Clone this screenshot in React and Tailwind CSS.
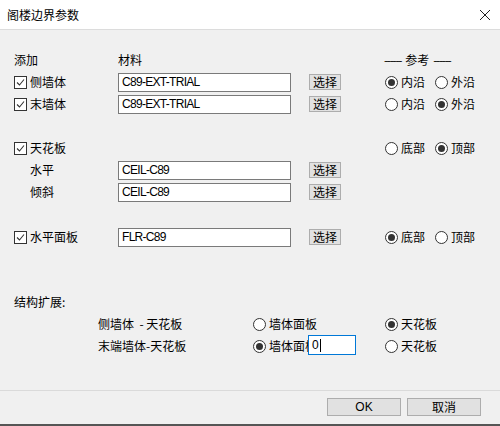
import React from 'react';

const cjk = "font-['Noto_Sans_CJK_SC',sans-serif]";

// small square checkbox with a tick
const Check = ({ label }) => (
  <div className="flex items-center">
    <span className="flex h-[13px] w-[13px] items-center justify-center border border-[#333] bg-white">
      <svg width="9" height="9" viewBox="0 0 9 9">
        <path d="M1 4.5 L3.5 7 L8 1.5" fill="none" stroke="#333" strokeWidth="1.1" />
      </svg>
    </span>
    <span className="ml-[3px]">{label}</span>
  </div>
);

const Radio = ({ label, on, width }) => (
  <div className="flex items-center" style={{ width }}>
    <span className="flex h-[13px] w-[13px] items-center justify-center rounded-full border border-[#333] bg-white">
      {on && <span className="h-[7px] w-[7px] rounded-full bg-[#333]" />}
    </span>
    <span className="ml-[3px] whitespace-nowrap">{label}</span>
  </div>
);

const Field = ({ value }) => (
  <div className="flex h-[19px] w-[173px] items-center border border-[#7a7a7a] bg-white pl-[3px] font-['Liberation_Sans',sans-serif] text-[12px] tracking-[-0.7px]">
    {value}
  </div>
);

const Pick = () => (
  <button className="ml-[18px] flex h-[16px] w-[32px] items-center justify-center border border-[#adadad] bg-[#e1e1e1] text-[12px] leading-none">
    选择
  </button>
);

const Row = ({ className = '', children }) => (
  <div className={`flex h-[22px] items-center ${className}`}>{children}</div>
);

const RefPair = ({ first, second, left }) => (
  <div className="ml-[44px] flex items-center">
    <Radio label={left[0]} on={first} width="50px" />
    <Radio label={left[1]} on={second} />
  </div>
);

export default function App() {
  return (
    <div className={`flex h-[426px] w-[500px] flex-col bg-[#f0f0f0] text-[12px] text-black ${cjk}`}>
      <div className="flex h-[30px] shrink-0 items-center justify-between border-b border-[#dcdcdc] bg-white pl-[7px] pr-[9px]">
        <span className="text-[12px]">阁楼边界参数</span>
        <svg width="12" height="12" viewBox="0 0 12 12">
          <path d="M1 1 L11 11 M11 1 L1 11" stroke="#222" strokeWidth="1" />
        </svg>
      </div>

      <div className="flex-1 pl-[14px]">
        <Row className="mt-[19px]">
          <span className="w-[104px]">添加</span>
          <span className="w-[266px]">材料</span>
          <span className="whitespace-nowrap tracking-[-1.3px]">------</span>
          <span className="mx-[4px]">参考</span>
          <span className="whitespace-nowrap tracking-[-1.3px]">------</span>
        </Row>
        <Row>
          <div className="w-[104px]"><Check label="侧墙体" /></div>
          <Field value="C89-EXT-TRIAL" />
          <Pick />
          <RefPair first left={['内沿', '外沿']} />
        </Row>
        <Row>
          <div className="w-[104px]"><Check label="末墙体" /></div>
          <Field value="C89-EXT-TRIAL" />
          <Pick />
          <RefPair second left={['内沿', '外沿']} />
        </Row>

        <Row className="mt-[22px]">
          <div className="w-[371px]"><Check label="天花板" /></div>
          <Radio label="底部" width="50px" />
          <Radio label="顶部" on />
        </Row>
        <Row>
          <span className="w-[104px] pl-[16px]">水平</span>
          <Field value="CEIL-C89" />
          <Pick />
        </Row>
        <Row>
          <span className="w-[104px] pl-[16px]">倾斜</span>
          <Field value="CEIL-C89" />
          <Pick />
        </Row>

        <Row className="mt-[23px]">
          <div className="w-[104px]"><Check label="水平面板" /></div>
          <Field value="FLR-C89" />
          <Pick />
          <RefPair first left={['底部', '顶部']} />
        </Row>

        <Row className="mt-[43px]">
          <span>结构扩展:</span>
        </Row>
        <Row>
          <span className="w-[239px] pl-[84px]">侧墙体 &nbsp;- 天花板</span>
          <div className="w-[132px]"><Radio label="墙体面板" /></div>
          <Radio label="天花板" on />
        </Row>
        <Row>
          <span className="w-[239px] pl-[84px]">末端墙体-天花板</span>
          <div className="relative w-[132px]">
            <Radio label="墙体面板" on />
            {/* inline edit box sitting over the label */}
            <div className="absolute left-[55px] top-[-2px] flex h-[20px] w-[48px] items-center border border-[#0078d7] bg-white pl-[3px] font-['Liberation_Sans',sans-serif]">
              0<span className="ml-[1px] h-[13px] w-px bg-black" />
            </div>
          </div>
          <Radio label="天花板" />
        </Row>
      </div>

      <div className="flex h-[36px] shrink-0 items-start justify-end gap-[6px] border-t border-[#dadada] border-b-2 border-b-[#555] pr-[19px] pt-[7px]">
        <button className="h-[18px] w-[74px] border border-[#adadad] bg-[#e1e1e1] font-['Liberation_Sans',sans-serif] text-[12px] leading-none">OK</button>
        <button className="h-[18px] w-[74px] border border-[#adadad] bg-[#e1e1e1] text-[12px] leading-none">取消</button>
      </div>
    </div>
  );
}
